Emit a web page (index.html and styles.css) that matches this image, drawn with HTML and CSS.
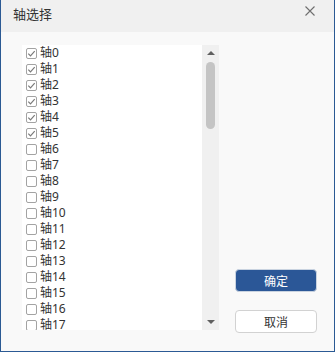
FILE: index.html
```html
<!DOCTYPE html>
<html lang="zh">

<head>
  <meta charset="UTF-8" />
  <title>轴选择</title>
  <link rel="stylesheet" href="styles.css">
</head>

<body>
  <div class="window">
    <div class="titlebar">
      <span class="title">轴选择</span>
      <svg class="close" width="10" height="10" viewBox="0 0 10 10">
        <path d="M0.5 0.5 L9.5 9.5 M9.5 0.5 L0.5 9.5" stroke="#6e6e6e" stroke-width="1.1" fill="none" />
      </svg>
    </div>

    <div class="content">
      <div class="listbox">
        <div class="items" id="items"></div>
        <div class="scrollbar">
          <div class="arrow up"></div>
          <div class="track">
            <div class="thumb"></div>
          </div>
          <div class="arrow down"></div>
        </div>
      </div>

      <div class="actions">
        <button class="btn primary">确定</button>
        <button class="btn">取消</button>
      </div>
    </div>
  </div>

  <script>
    const list = document.getElementById("items");
    const check = '<svg width="11" height="11" viewBox="0 0 11 11"><path d="M2.3 5.6 L4.5 7.8 L8.7 3.2" stroke="#7a7a7a" stroke-width="1.2" fill="none"/></svg>';
    for (let i = 0; i < 18; i++) {
      const row = document.createElement("div");
      row.className = "item";
      row.innerHTML = '<span class="box">' + (i < 6 ? check : "") + '</span><span class="label">轴' + i + '</span>';
      list.appendChild(row);
    }
  </script>
</body>

</html>
```

FILE: styles.css
```css
* {
  margin: 0;
  padding: 0;
  box-sizing: border-box;
  font-family: "Noto Sans", "Noto Sans CJK SC", sans-serif;
}

body {
  background: #ffffff;
}

.window {
  width: 335px;
  height: 352px;
  background: #f9f9f9;
  border: 1px solid #2b5a94;
  border-top: none;
  overflow: hidden;
}

.titlebar {
  height: 32px;
  background: #f0f0f0;
  display: flex;
  align-items: center;
  justify-content: space-between;
  padding: 0 19px 4px 12px;
  margin: 0 -1px;
  border-left: 1px solid #2b5a94;
  border-right: 1px solid #2b5a94;
}

.title {
  font-size: 13px;
  line-height: 16px;
  color: #333;
}

.close {
  margin-top: -6px;
}

.content {
  display: flex;
  padding: 13px 0 0 21px;
}

.listbox {
  width: 197px;
  height: 285px;
  background: #fff;
  display: flex;
  overflow: hidden;
}

.items {
  flex: 1;
  padding-left: 4px;
}

.item {
  height: 16px;
  display: flex;
  align-items: center;
}

.box {
  width: 11px;
  height: 11px;
  border: 1px solid #a3a3a3;
  border-radius: 2px;
  background: #fff;
  display: flex;
  align-items: center;
  justify-content: center;
  margin-right: 3px;
}

.box svg {
  flex: none;
}

.label {
  font-size: 12px;
  line-height: 16px;
  color: #333;
}

.scrollbar {
  width: 17px;
  background: #f0f0f0;
  display: flex;
  flex-direction: column;
  align-items: center;
}

.arrow {
  width: 0;
  height: 0;
  border-left: 4px solid transparent;
  border-right: 4px solid transparent;
}

.arrow.up {
  margin-top: 6px;
  border-bottom: 4px solid #606060;
}

.arrow.down {
  margin-bottom: 6px;
  border-top: 4px solid #606060;
}

.track {
  flex: 1;
  width: 100%;
  padding-top: 7px;
  display: flex;
  justify-content: center;
}

.thumb {
  width: 9px;
  height: 67px;
  border-radius: 5px;
  background: #c4c4c4;
}

.actions {
  display: flex;
  flex-direction: column;
  gap: 18px;
  padding-top: 224px;
  margin-left: 16px;
}

.btn {
  width: 82px;
  height: 23px;
  border: 1px solid #d2d2d2;
  border-radius: 4px;
  background: #fff;
  font-size: 12px;
  color: #333;
}

.btn.primary {
  background: #2b5797;
  color: #fff;
  border-color: #c9d3e0;
}
```
